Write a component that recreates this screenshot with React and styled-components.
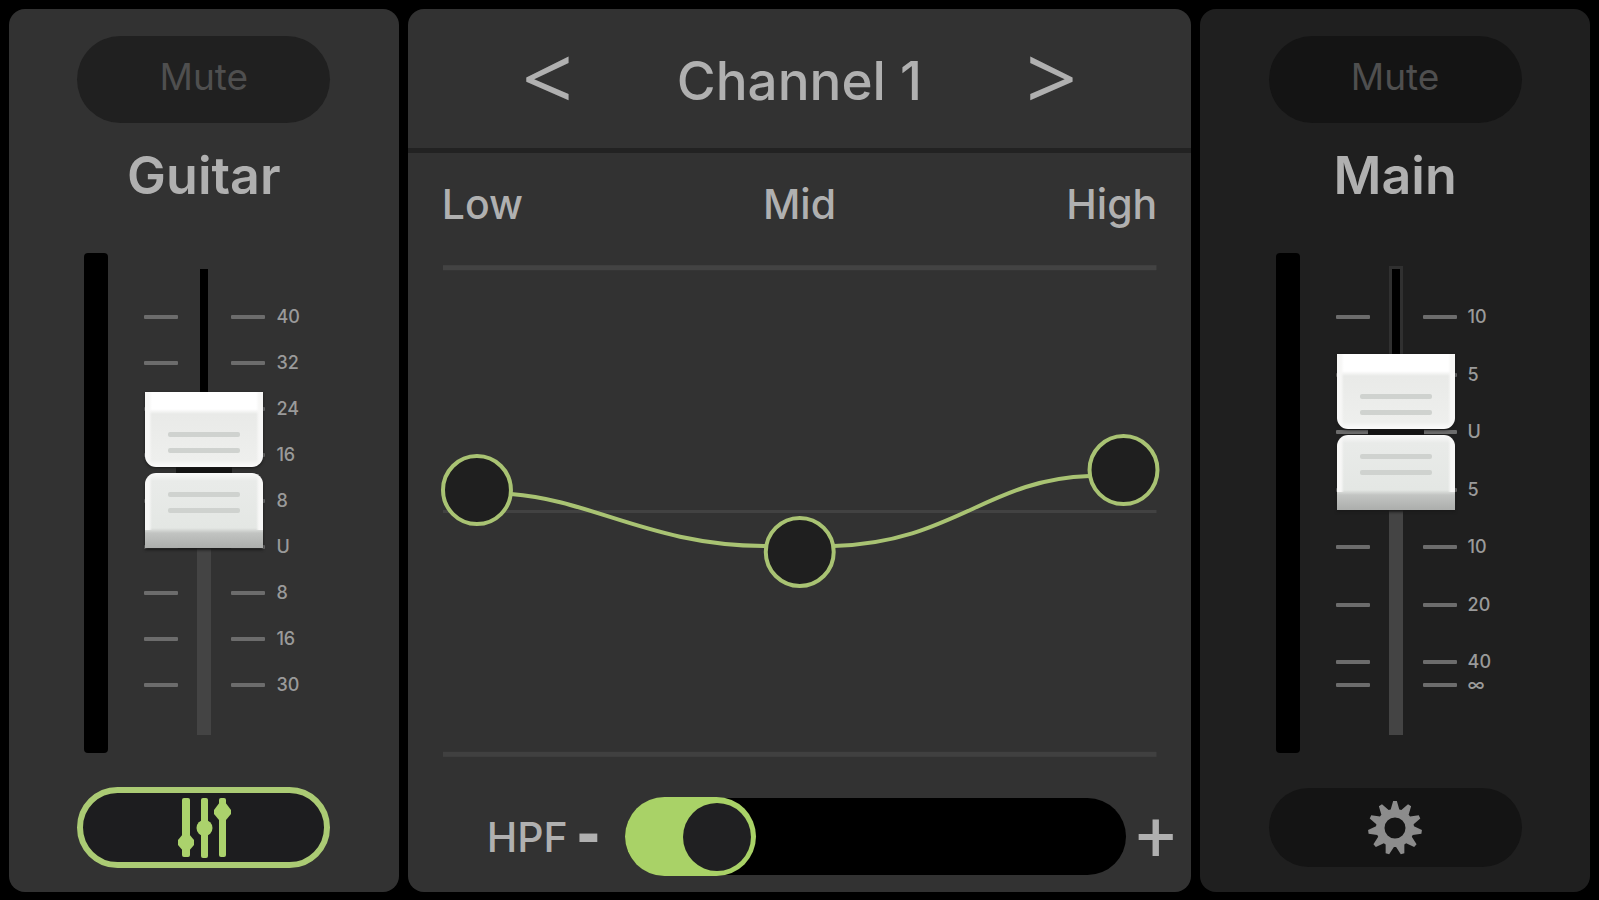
import React, { useState } from 'react';
import styled, { createGlobalStyle } from 'styled-components';

const GlobalStyle = createGlobalStyle`
  * {
    box-sizing: border-box;
  }

  body {
    margin: 0;
    background: #000;
    color: #b0b0b0;
    font-family: Inter, 'Liberation Sans', sans-serif;
  }

  button {
    padding: 0;
    border: none;
    background: none;
    color: inherit;
    font: inherit;
    cursor: pointer;
  }
`;

const Mixer = styled.main`
  display: grid;
  grid-template-columns: 195fr 392fr 195fr;
  gap: 9px;
  min-height: 100vh;
  padding: 9px 9px 8px;
`;

const Panel = styled.section`
  display: flex;
  flex-direction: column;
  min-width: 0;
  border-radius: 16px;
  background: ${(props) => (props.$dark ? '#1f1f1f' : '#323232')};
`;

/* ---- channel strips ---- */

const Strip = styled(Panel)`
  align-items: center;
  padding: 27px 0 23px;
`;

const MuteButton = styled.button`
  width: 253px;
  height: 87px;
  padding-bottom: 6px;
  border-radius: 44px;
  background: ${(props) => (props.$dark ? '#141414' : '#202020')};
  color: ${(props) => (props.$on ? '#b0b0b0' : '#4f4f4f')};
  font-size: 37px;
`;

const StripName = styled.h2`
  margin: 23px 0 47px;
  font-size: 52px;
  font-weight: 600;
  line-height: 60px;
`;

const StripBody = styled.div`
  display: flex;
  flex: 1;
  gap: 36px;
  width: 253px;
  min-height: 420px;
  padding-left: 7px;
`;

const Meter = styled.div`
  width: 26px;
  border-radius: 4px;
  background: #000;
`;

const FaderArea = styled.div`
  position: relative;
  flex: 1;
  display: flex;
  flex-direction: column;
  padding: 54px 0 58px;
`;

const Mark = styled.div`
  display: grid;
  grid-template-columns: 34px 34px 12px;
  column-gap: 53px;
  align-items: center;
  align-content: end;
  flex: ${(props) => props.$weight} 0 0;
  min-height: 20px;
  color: #9a9a9a;
  font-size: 18px;
  font-weight: 500;
  line-height: 20px;

  &:first-child {
    flex: 0 0 20px;
  }

  span {
    margin-left: -42px;
  }
`;

const Tick = styled.i`
  height: 4px;
  border-radius: 1px;
  background: #6c6c6c;
`;

const Track = styled.div`
  position: absolute;
  top: 13px;
  bottom: 18px;
  left: 0;
  width: 120px;

  &::before {
    content: '';
    position: absolute;
    inset: 0 53px;
    background: #444;
  }
`;

const TrackTop = styled.div`
  position: absolute;
  top: 0;
  left: 53px;
  width: 14px;
  border: 3px solid ${(props) => (props.$dark ? '#303030' : '#323232')};
  border-bottom: none;
  background: #000;
`;

const Cap = styled.div`
  position: absolute;
  left: 1px;
  display: flex;
  flex-direction: column;
  gap: 6px;
  width: 118px;
  height: 156px;
  background: linear-gradient(90deg, transparent 26%, #141414 26%, #141414 74%, transparent 74%) center / 100% 12px no-repeat;
`;

const CapHalf = styled.div`
  display: flex;
  height: 75px;
  flex-direction: column;
  align-items: center;
  gap: 11px;
`;

const sideShine = 'linear-gradient(90deg, #f7f7f6 4px, transparent 7px, transparent 111px, #f7f7f6 114px)';

const CapUpper = styled(CapHalf)`
  justify-content: flex-end;
  padding-bottom: 14px;
  border-radius: 0 0 11px 11px;
  background: ${sideShine}, linear-gradient(#fff 0, #fff 17px, #e9eae8 22px, #eeefed 68px, #fafafa 74px);
  box-shadow: 0 1px 3px #1a1a1a;
`;

const CapLower = styled(CapHalf)`
  padding-top: 19px;
  border-radius: 11px 11px 0 0;
  background:
    ${sideShine} 0 0 / 100% 57px no-repeat,
    linear-gradient(#fafafa 0, #e9ebe9 8px, #e4e7e4 55px, #c2c4c2 60px, #acaeac 75px);
  box-shadow: 0 2px 3px #1a1a1a;
`;

const Groove = styled.i`
  width: 72px;
  height: 5px;
  border-radius: 2px;
  background: #cfd2cf;
`;

const FaderInput = styled.input`
  position: absolute;
  inset: 0;
  width: 100%;
  height: 100%;
  margin: 0;
  opacity: 0;
  cursor: pointer;
  writing-mode: ${(props) => (props.$vertical ? 'vertical-lr' : 'horizontal-tb')};
  direction: ${(props) => (props.$vertical ? 'rtl' : 'ltr')};
`;

const StripFooter = styled.div`
  display: flex;
  align-items: center;
  height: 83px;
  margin-top: 33px;
`;

const PillButton = styled.button`
  display: flex;
  align-items: center;
  justify-content: center;
  width: 253px;
  height: ${(props) => (props.$active ? '81px' : '79px')};
  border: ${(props) => (props.$active ? '6px solid #abcb74' : 'none')};
  border-radius: 42px;
  background: ${(props) => (props.$active ? '#1d1d1f' : '#141414')};
`;

/* ---- equaliser ---- */

const EqHeader = styled.header`
  display: grid;
  grid-template-columns: 100px minmax(0, 404px) 100px;
  align-items: center;
  justify-content: center;
  height: 144px;
  border-bottom: 5px solid #222;
`;

const EqTitle = styled.h1`
  margin: 0;
  padding-top: 4px;
  font-size: 53px;
  font-weight: 500;
  line-height: 60px;
  text-align: center;
`;

const StepButton = styled.button`
  height: 100px;
  padding-bottom: 6px;
  font-family: 'Open Sans', 'Noto Sans', sans-serif;
  font-size: 90px;
  line-height: 90px;
`;

const Bands = styled.div`
  display: grid;
  grid-template-columns: 1fr auto 1fr;
  padding: 26px 34px 36px;
  font-size: 41px;
  font-weight: 500;
  line-height: 50px;

  span:last-child {
    text-align: right;
  }
`;

const Plot = styled.svg`
  flex: 1;
  width: 100%;
  min-height: 0;
  padding: 0 35px;
  overflow: visible;
`;

const HpfRow = styled.div`
  display: flex;
  align-items: center;
  height: 81px;
  margin: 39px 6px 15px 79px;
  font-size: 41px;
`;

const HpfLabel = styled.label`
  width: 90px;
  font-weight: 500;
`;

const MinusButton = styled.button`
  width: 20px;
  margin-right: 28px;
  padding-bottom: 10px;
  font-family: 'Liberation Sans', Arial, sans-serif;
  font-size: 70px;
  font-weight: 700;
  line-height: 80px;
`;

const PlusButton = styled.button`
  width: 59px;
  font-family: Roboto, sans-serif;
  font-size: 70px;
  line-height: 80px;
`;

const HpfSlider = styled.div`
  position: relative;
  display: flex;
  align-items: center;
  flex: 1;
  height: 81px;

  &::before {
    content: '';
    flex: 1;
    height: 77px;
    border-radius: 39px;
    background: #000;
  }
`;

const HpfFill = styled.div`
  position: absolute;
  top: 1px;
  left: 0;
  display: flex;
  align-items: center;
  justify-content: flex-end;
  height: 79px;
  padding: 5px;
  border-radius: 40px;
  background: #a9d267;
`;

const HpfKnob = styled.div`
  width: 68px;
  height: 68px;
  border-radius: 50%;
  background: #202022;
`;

function FadersIcon() {
  return (
    <svg width="58" height="62" viewBox="0 0 58 62" fill="#abd26c" aria-hidden="true">
      <rect x="7" y="1" width="8" height="59" rx="2" />
      <path d="M3 43L8 37H14L19 43V48L13 55H9L3 48Z" />
      <rect x="26" y="1" width="7" height="60" rx="2" />
      <circle cx="29.500" cy="31" r="8" />
      <rect x="44" y="1" width="7" height="59" rx="2" />
      <path d="M45 5H50L56 13V17L51 23H44L39 17V13Z" />
    </svg>
  );
}

const GEAR_TEETH = 11;

function gearPath() {
  const step = (Math.PI * 2) / GEAR_TEETH;
  const points = [];
  for (let i = 0; i < GEAR_TEETH; i++) {
    const mid = i * step - Math.PI / 2;
    [[-0.4, 19], [-0.12, 27], [0.12, 27], [0.4, 19]].forEach(([offset, r]) => {
      const a = mid + offset * step;
      points.push(`${(27 + r * Math.cos(a)).toFixed(2)} ${(27 + r * Math.sin(a)).toFixed(2)}`);
    });
  }
  return `M${points.join('L')}Z M27 16.500a10.500 10.500 0 1 0 0 21a10.500 10.500 0 1 0 0 -21Z`;
}

function GearIcon() {
  return (
    <svg width="54" height="54" viewBox="0 0 54 54" aria-hidden="true">
      <path d={gearPath()} fill="#8c8c8c" fillRule="evenodd" />
    </svg>
  );
}

// weight = distance from the previous mark
const guitarMarks = ['40', '32', '24', '16', '8', 'U', '8', '16', '30'].map((label) => ({ label, weight: 10 }));
const mainMarks = [
  ...['10', '5', 'U', '5', '10', '20', '40'].map((label) => ({ label, weight: 10 })),
  { label: '∞', weight: 4 },
];

function Fader({ name, marks, start, dark }) {
  const [level, setLevel] = useState(start);
  const top = `calc((100% - 156px) * ${(1000 - level) / 1000})`;

  return (
    <StripBody>
      <Meter />
      <FaderArea>
        {marks.map((mark, i) => (
          <Mark key={i} $weight={mark.weight}>
            <Tick />
            <Tick />
            <span>{mark.label}</span>
          </Mark>
        ))}
        <Track>
          <TrackTop $dark={dark} style={{ height: `calc(${top} + 78px)` }} />
          <Cap style={{ top }}>
            <CapUpper>
              <Groove />
              <Groove />
            </CapUpper>
            <CapLower>
              <Groove />
              <Groove />
            </CapLower>
          </Cap>
          <FaderInput
            $vertical
            type="range"
            min="0"
            max="1000"
            value={level}
            aria-label={`${name} level`}
            onChange={(e) => setLevel(Number(e.target.value))}
          />
        </Track>
      </FaderArea>
    </StripBody>
  );
}

function ChannelStrip({ name, marks, start, dark, active, icon, action }) {
  const [muted, setMuted] = useState(false);

  return (
    <Strip $dark={dark}>
      <MuteButton type="button" $dark={dark} $on={muted} aria-pressed={muted} onClick={() => setMuted(!muted)}>
        Mute
      </MuteButton>
      <StripName>{name}</StripName>
      <Fader name={name} marks={marks} start={start} dark={dark} />
      <StripFooter>
        <PillButton type="button" $active={active} aria-label={action}>
          {icon}
        </PillButton>
      </StripFooter>
    </Strip>
  );
}

const eqPoints = [
  { id: 'low', x: 34, y: 225 },
  { id: 'mid', x: 357, y: 287 },
  { id: 'high', x: 681, y: 205 },
];

function EqPanel() {
  const [channel, setChannel] = useState(1);
  const [hpf, setHpf] = useState(120);

  return (
    <Panel>
      <EqHeader>
        <StepButton type="button" aria-label="Previous channel" onClick={() => setChannel(Math.max(1, channel - 1))}>
          &lt;
        </StepButton>
        <EqTitle>Channel {channel}</EqTitle>
        <StepButton type="button" aria-label="Next channel" onClick={() => setChannel(channel + 1)}>
          &gt;
        </StepButton>
      </EqHeader>
      <Bands>
        <span>Low</span>
        <span>Mid</span>
        <span>High</span>
      </Bands>
      <Plot viewBox="0 0 714 492" role="img" aria-label="EQ curve">
        <rect x="0" y="0" width="714" height="5" fill="#434343" />
        <rect x="0" y="245" width="714" height="3" fill="#424242" />
        <rect x="0" y="487" width="714" height="5" fill="#404040" />
        <path
          d="M68 229C150 235 210 281 323 281H391C510 278 545 214 647 211"
          fill="none"
          stroke="#a9c373"
          strokeWidth="4"
        />
        {eqPoints.map((point) => (
          <circle key={point.id} cx={point.x} cy={point.y} r="34" fill="#1f1f1f" stroke="#a9c373" strokeWidth="4" />
        ))}
      </Plot>
      <HpfRow>
        <HpfLabel htmlFor="hpf">HPF</HpfLabel>
        <MinusButton type="button" aria-label="Lower HPF" onClick={() => setHpf(Math.max(0, hpf - 20))}>
          -
        </MinusButton>
        <HpfSlider>
          <HpfFill style={{ width: `calc(81px + (100% - 81px) * ${hpf / 1000})` }}>
            <HpfKnob />
          </HpfFill>
          <FaderInput
            id="hpf"
            type="range"
            min="0"
            max="1000"
            value={hpf}
            onChange={(e) => setHpf(Number(e.target.value))}
          />
        </HpfSlider>
        <PlusButton type="button" aria-label="Raise HPF" onClick={() => setHpf(Math.min(1000, hpf + 20))}>
          +
        </PlusButton>
      </HpfRow>
    </Panel>
  );
}

const App = () => {
  return (
    <>
      <GlobalStyle />
      <Mixer>
        <ChannelStrip name="Guitar" marks={guitarMarks} start={596} active icon={<FadersIcon />} action="Show equaliser" />
        <EqPanel />
        <ChannelStrip name="Main" marks={mainMarks} start={718} dark icon={<GearIcon />} action="Settings" />
      </Mixer>
    </>
  );
};

export default App;
